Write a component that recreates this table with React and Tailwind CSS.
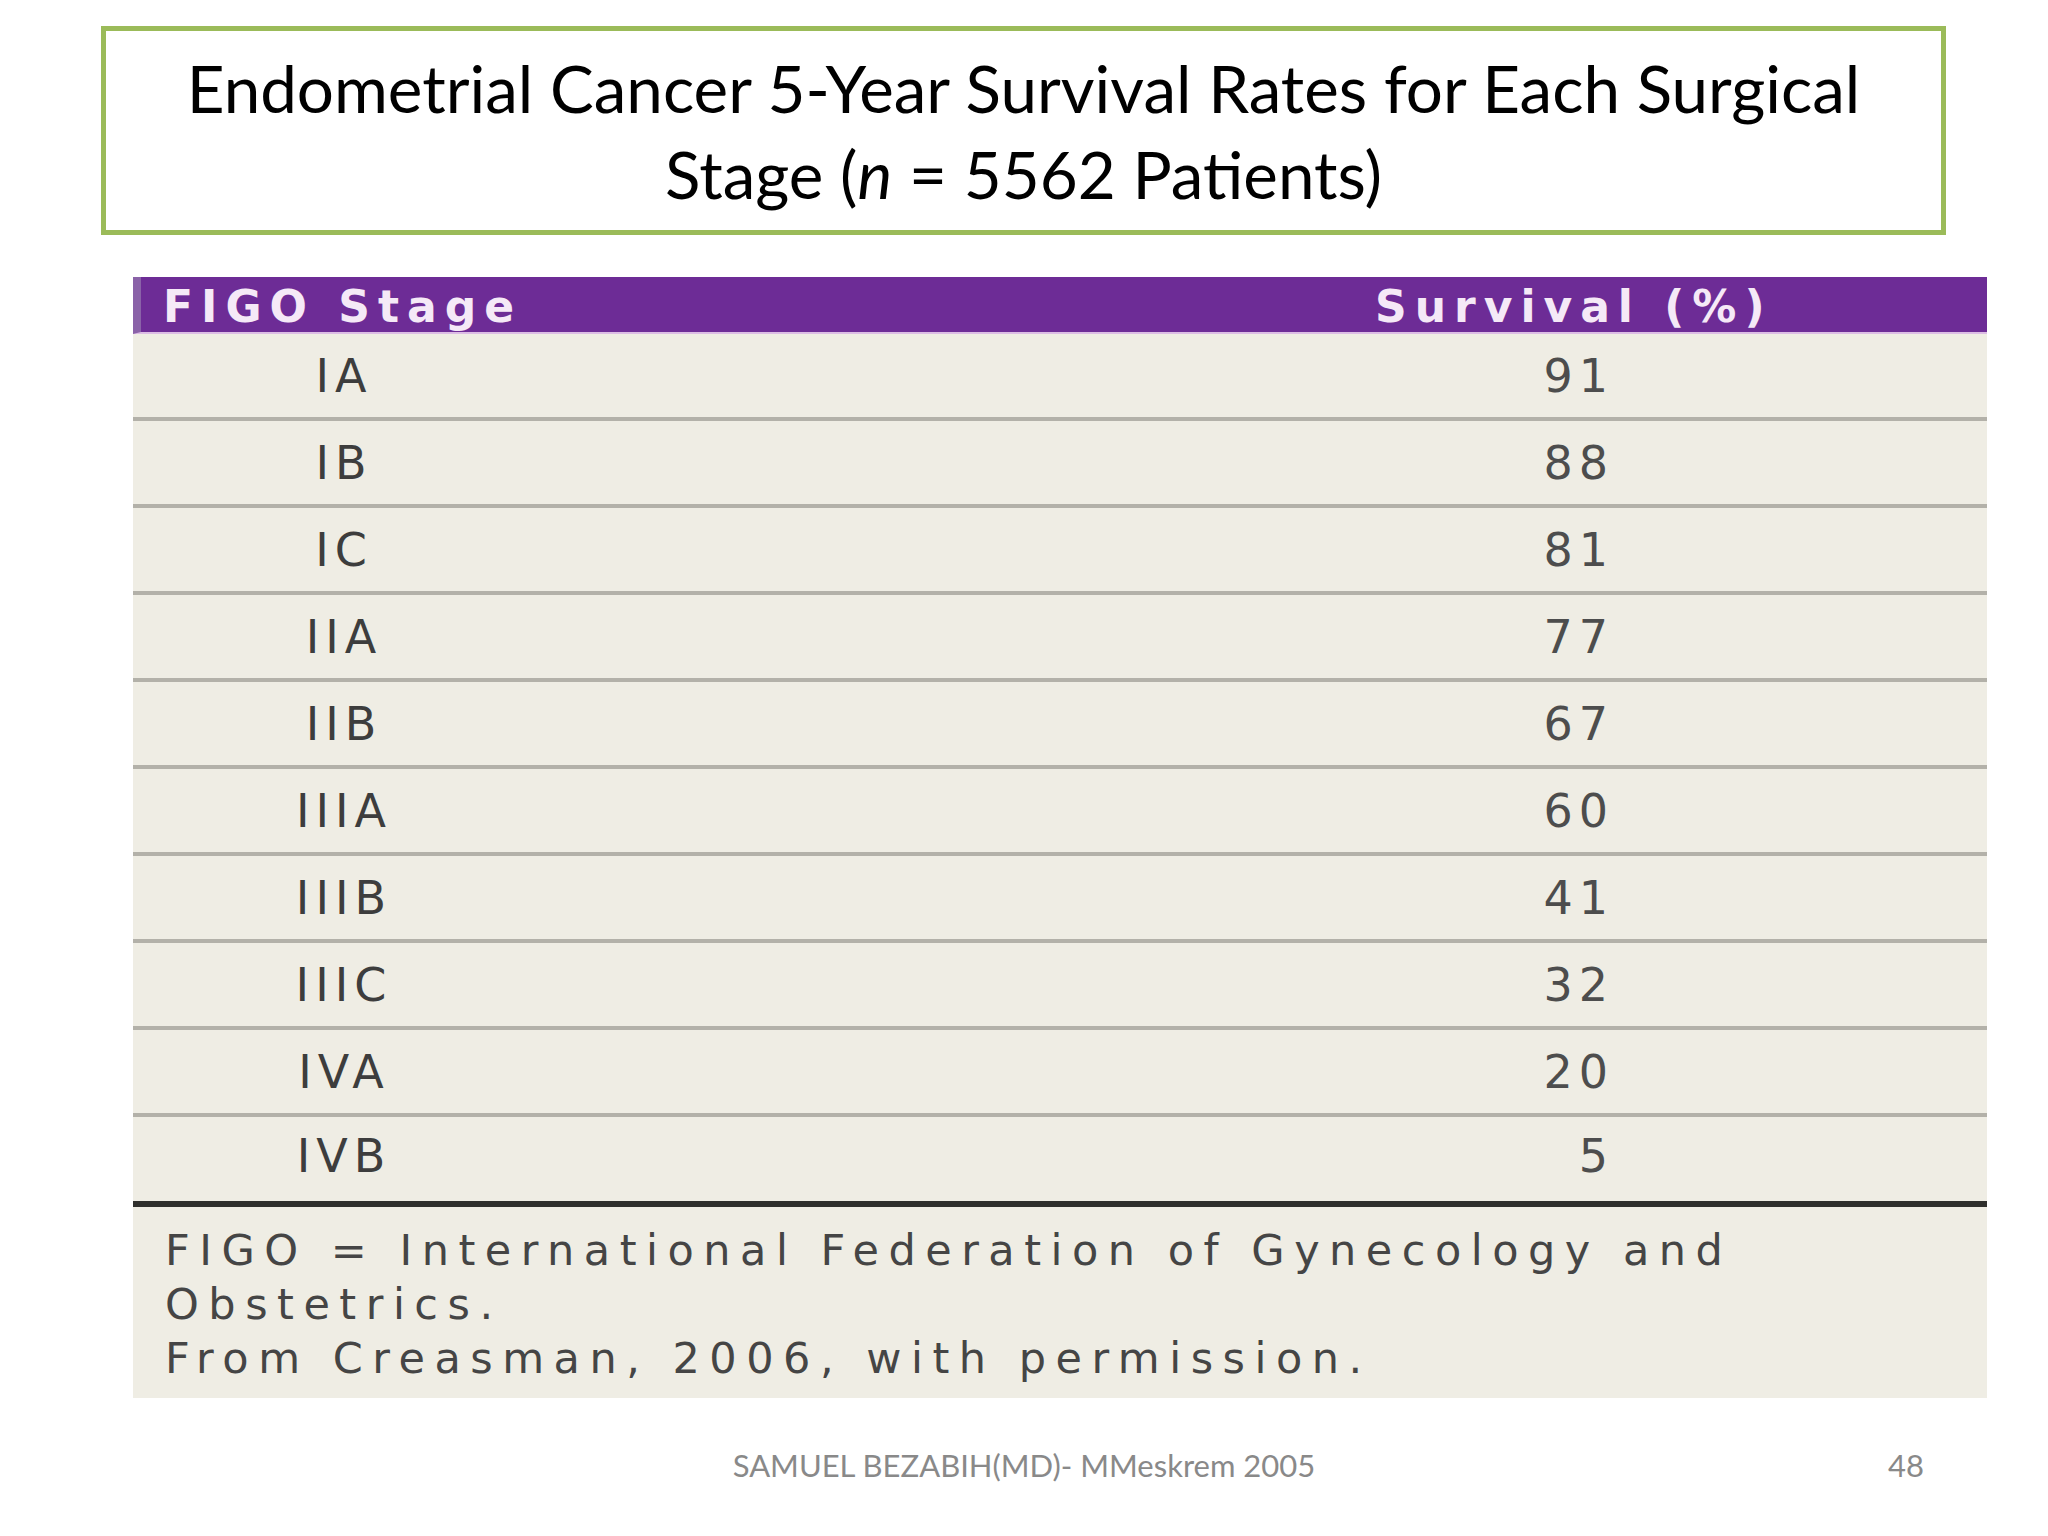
const rows = [
  { stage: "IA", survival: "91" },
  { stage: "IB", survival: "88" },
  { stage: "IC", survival: "81" },
  { stage: "IIA", survival: "77" },
  { stage: "IIB", survival: "67" },
  { stage: "IIIA", survival: "60" },
  { stage: "IIIB", survival: "41" },
  { stage: "IIIC", survival: "32" },
  { stage: "IVA", survival: "20" },
  { stage: "IVB", survival: "5" },
];

const SurvivalTable = () => {
  return (
    <div className="ml-[133px] mt-[42px] w-[1854px] font-['DejaVu_Sans',sans-serif]">
      <div className="flex h-[57px] items-center border-b-2 border-l-[8px] border-b-[#dcbde4] border-l-[#8a62a8] bg-[#6d2c96] pt-[4px] text-[44px] font-bold leading-none tracking-[8px] text-[#f5e9f7]">
        <span className="w-[1234px] pl-[22px]">FIGO Stage</span>
        <span>Survival (%)</span>
      </div>

      {rows.map((row, i) => (
        <div
          key={row.stage}
          className={
            i === rows.length - 1
              ? "flex h-[90px] items-center border-b-[6px] border-[#2f2f2c] bg-[#efede4] pb-[6px] text-[46px] leading-none tracking-[6px] text-[#3d3d3d]"
              : "flex h-[87px] items-center border-b-4 border-[#b3b1a9] bg-[#efede4] text-[46px] leading-none tracking-[6px] text-[#3d3d3d]"
          }
        >
          <span className="w-[416px] pl-[6px] text-center">{row.stage}</span>
          <span className="flex-1 pr-[373px] text-right text-[#4d4d4d]">
            {row.survival}
          </span>
        </div>
      ))}

      <div className="h-[191px] bg-[#efede4] pl-[32px] pt-[16px] text-[43px] leading-[54px] tracking-[9.5px] text-[#454545]">
        <div>FIGO = International Federation of Gynecology and</div>
        <div>Obstetrics.</div>
        <div>From Creasman, 2006, with permission.</div>
      </div>
    </div>
  );
};

export default function App() {
  return (
    <div className="flex h-[1536px] w-[2048px] flex-col bg-white">
      <div className="ml-[101px] mt-[26px] flex h-[209px] w-[1845px] flex-col items-center justify-center border-[5px] border-[#9bbb59] font-['Lato',sans-serif] text-[65.5px] leading-[86px] text-black">
        <div>Endometrial Cancer 5-Year Survival Rates for Each Surgical</div>
        <div>
          Stage (<i>n</i> = 5562 Patients)
        </div>
      </div>

      <SurvivalTable />

      <div className="mt-[47px] grid grid-cols-[1fr_auto_1fr] font-['Lato',sans-serif] text-[31px] leading-[40px] text-[#898989]">
        <div />
        <div>SAMUEL BEZABIH(MD)- MMeskrem 2005</div>
        <div className="pr-[124px] text-right">48</div>
      </div>
    </div>
  );
}
